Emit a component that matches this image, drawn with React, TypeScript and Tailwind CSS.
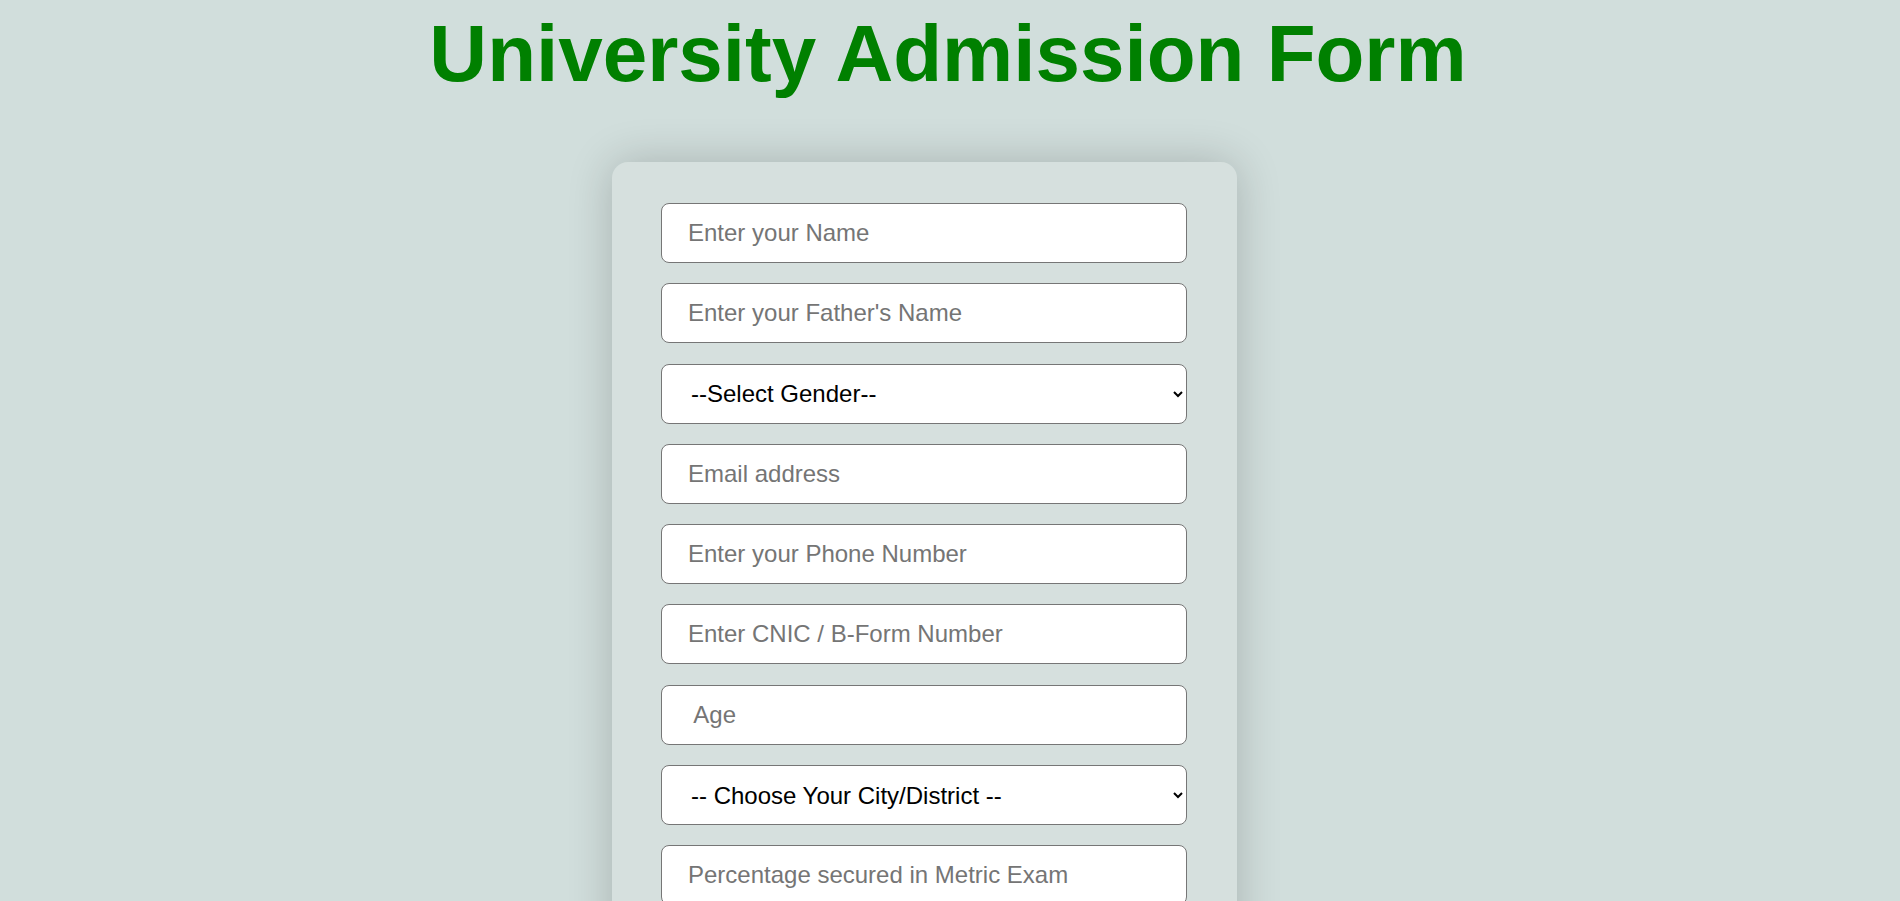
const fieldClass =
  'block w-full h-[60px] mb-[20.3px] px-[26px] bg-white border border-[#767676] rounded-lg text-[24px] text-black placeholder:text-[#757575] outline-none';

export default function App() {
  return (
    <div className="min-h-screen bg-[#d1dedc] p-2 font-['Liberation_Sans',Arial,sans-serif]">
      <h1 className="pr-1 text-center text-[80px] leading-[1.15] font-bold text-[#008000]">
        University Admission Form
      </h1>

      {/* Form card */}
      <form className="w-[625px] ml-[604px] mt-[62px] mb-10 pl-[49px] pr-[50px] pt-[41px] pb-5 bg-[#d6e0de] rounded-2xl shadow-[0_0_45px_rgba(0,0,0,0.2)]">
        <input type="text" className={fieldClass} placeholder="Enter your Name" />
        <input type="text" className={fieldClass} placeholder="Enter your Father's Name" />
        <select className={fieldClass + ' pl-[25px] pr-[6px]'} defaultValue="">
          <option value="">--Select Gender--</option>
          <option value="male">Male</option>
          <option value="female">Female</option>
        </select>
        <input type="email" className={fieldClass} placeholder="Email address" />
        <input type="text" className={fieldClass} placeholder="Enter your Phone Number" />
        <input type="text" className={fieldClass} placeholder="Enter CNIC / B-Form Number" />
        <input type="number" className={fieldClass} placeholder=" Age" />
        <select className={fieldClass + ' pl-[25px] pr-[6px]'} defaultValue="">
          <option value="">-- Choose Your City/District --</option>
          <option value="lahore">Lahore</option>
          <option value="karachi">Karachi</option>
          <option value="islamabad">Islamabad</option>
        </select>
        <input type="text" className={fieldClass} placeholder="Percentage secured in Metric Exam" />
        <input type="text" className={fieldClass} placeholder="Percentage secured in Intermediate" />
        <button
          type="submit"
          className="block w-full h-[60px] mb-5 bg-[#008000] text-white text-[24px] font-bold rounded-lg"
        >
          Submit
        </button>
      </form>
    </div>
  );
}
